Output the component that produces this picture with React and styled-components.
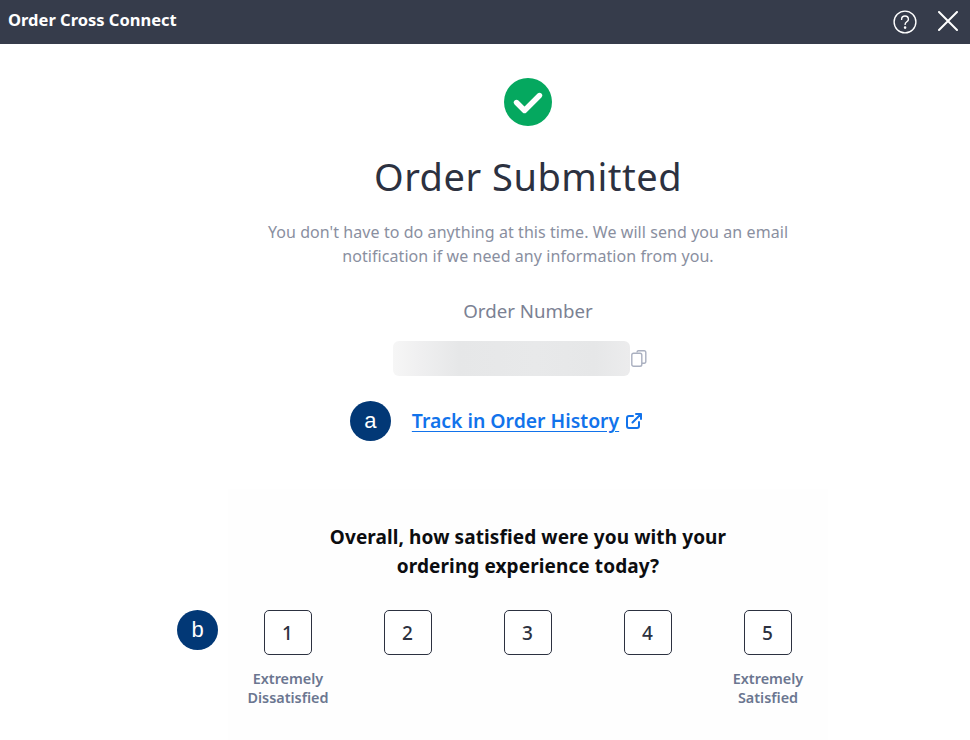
import React from 'react';
import styled, { createGlobalStyle } from 'styled-components';

const GlobalStyle = createGlobalStyle`
  html, body {
    margin: 0;
    padding: 0;
    background: #fff;
    font-family: 'Noto Sans', 'Open Sans', sans-serif;
  }
`;

const Page = styled.div`
  width: 970px;
  height: 740px;
  overflow: hidden;
  background: #fff;
`;

const TitleBar = styled.header`
  height: 44px;
  background: #363c4b;
  color: #fff;
  display: flex;
  align-items: center;
  justify-content: space-between;
  padding: 0 12px 0 8px;
`;

const TitleText = styled.h1`
  margin: 0 0 4px;
  font-size: 16.5px;
  line-height: 40px;
  height: 40px;
  font-weight: 700;
`;

const TitleActions = styled.div`
  display: flex;
  align-items: center;
  gap: 21px;
`;

const CloseGlyph = styled.svg`
  margin-bottom: 3px;
`;

const Body = styled.main`
  padding: 34px 0 0 86px;
  display: flex;
  flex-direction: column;
  align-items: center;
`;

const Heading = styled.h2`
  margin: 24px 0 0;
  font-size: 38px;
  line-height: 52px;
  font-weight: 400;
  letter-spacing: 0.52px;
  color: #2c3140;
`;

const Lead = styled.p`
  margin: 18px 0 0;
  width: 540px;
  text-align: center;
  font-size: 16px;
  line-height: 24px;
  letter-spacing: 0.07px;
  color: #8a8f9f;
`;

const OrderLabel = styled.div`
  margin-top: 30px;
  font-size: 18.7px;
  line-height: 26px;
  color: #7b8193;
`;

const OrderRow = styled.div`
  margin-top: 17px;
  width: 270px;
  height: 35px;
  display: flex;
  align-items: center;
  gap: 1px;
`;

const OrderMask = styled.div`
  width: 237px;
  height: 100%;
  border-radius: 6px;
  background: linear-gradient(90deg, #f6f6f6 0%, #f0f0f1 10%, #e6e7e8 28%, #e8e9ea 60%, #e6e7e8 85%, #ececed 100%);
`;

const LinkRow = styled.div`
  margin-top: 30px;
  margin-right: 2px;
  position: relative;
  display: flex;
  align-items: center;
  gap: 7px;
  color: #1273eb;
`;

const TrackLink = styled.a`
  font-size: 19.4px;
  line-height: 30px;
  font-weight: 600;
  color: #1273eb;
  text-decoration: underline;
  text-underline-offset: 3px;
`;

const Survey = styled.section`
  margin-top: 53px;
  width: 600px;
  height: 251px;
  background: #fefefe;
  padding-top: 34px;
  box-sizing: border-box;
  display: flex;
  flex-direction: column;
  align-items: center;
  position: relative;
`;

const Question = styled.h3`
  margin: 0;
  width: 440px;
  text-align: center;
  font-size: 19px;
  line-height: 29px;
  letter-spacing: 0.1px;
  font-weight: 700;
  color: #0c0d10;
`;

const Scale = styled.div`
  margin-top: 29px;
  display: grid;
  grid-template-columns: repeat(5, 120px);
`;

const ScaleItem = styled.div`
  display: flex;
  flex-direction: column;
  align-items: center;
`;

const ScaleButton = styled.button`
  width: 48px;
  height: 45px;
  padding: 0 1px 0 0;
  box-sizing: border-box;
  background: #fff;
  border: 1px solid #2c3140;
  border-radius: 5px;
  font-family: inherit;
  font-size: 19px;
  font-weight: 500;
  color: #2c3140;
`;

const ScaleCaption = styled.span`
  margin-top: 14px;
  text-align: center;
  font-size: 14.4px;
  line-height: 19px;
  font-weight: 600;
  color: #6b7690;
`;

const Marker = styled.span`
  position: absolute;
  left: ${({ $left }) => $left}px;
  top: ${({ $top }) => $top}px;
  width: 41px;
  height: 40px;
  border-radius: 50%;
  background: #023876;
  color: #fff;
  display: flex;
  align-items: center;
  justify-content: center;
  font-family: 'Liberation Sans', Arial, sans-serif;
  font-size: 22px;
  line-height: 1;
`;

const HelpIcon = () => (
  <svg width="24" height="24" viewBox="0 0 24 24" fill="none" stroke="#fff" strokeWidth="1.4" strokeLinecap="round">
    <circle cx="12" cy="12" r="10.9" />
    <path d="M8.6 9.4a3.4 3.4 0 0 1 6.8 0c0 2.2-3.3 2.6-3.3 5" />
    <circle cx="12.1" cy="17.6" r="0.6" fill="#fff" />
  </svg>
);

const CloseIcon = () => (
  <CloseGlyph width="20" height="20" viewBox="0 0 20 20" fill="none" stroke="#fff" strokeWidth="2" strokeLinecap="round">
    <path d="M1 1l18 18M19 1L1 19" />
  </CloseGlyph>
);

const SuccessIcon = () => (
  <svg width="48" height="48" viewBox="0 0 48 48">
    <circle cx="24" cy="24" r="24" fill="#05a85f" />
    <path d="M12.5 24.5l8 8 15-15" fill="none" stroke="#fff" strokeWidth="5.4" strokeLinecap="round" strokeLinejoin="round" />
  </svg>
);

const CopyIcon = () => (
  <svg width="16" height="17" viewBox="0 0 16 17" fill="none" stroke="#aab0c0" strokeWidth="1.4">
    <path d="M6 2.6V2.2A1.5 1.5 0 0 1 7.5.8h5.8a1.5 1.5 0 0 1 1.5 1.5v9.4a1.5 1.5 0 0 1-1.5 1.5H11" />
    <rect x="0.8" y="3.2" width="10" height="13" rx="1.8" />
  </svg>
);

const LinkOutIcon = () => (
  <svg width="16" height="16" viewBox="0 0 16 16" fill="none" stroke="currentColor" strokeWidth="2" strokeLinecap="round" strokeLinejoin="round">
    <path d="M7 3H3a2 2 0 0 0-2 2v8a2 2 0 0 0 2 2h8a2 2 0 0 0 2-2V9" />
    <path d="M6.5 9.5L15 1M10 1h5v5" />
  </svg>
);

const ratings = [
  { value: 1, caption: ['Extremely', 'Dissatisfied'] },
  { value: 2 },
  { value: 3 },
  { value: 4 },
  { value: 5, caption: ['Extremely', 'Satisfied'] },
];

export default function App() {
  return (
    <Page>
      <GlobalStyle />
      <TitleBar>
        <TitleText>Order Cross Connect</TitleText>
        <TitleActions>
          <HelpIcon />
          <CloseIcon />
        </TitleActions>
      </TitleBar>
      <Body>
        <SuccessIcon />
        <Heading>Order Submitted</Heading>
        <Lead>
          You don't have to do anything at this time. We will send you an email
          notification if we need any information from you.
        </Lead>
        <OrderLabel>Order Number</OrderLabel>
        <OrderRow>
          <OrderMask />
          <CopyIcon />
        </OrderRow>
        <LinkRow>
          <Marker $left={-62} $top={-5}>a</Marker>
          <TrackLink>Track in Order History</TrackLink>
          <LinkOutIcon />
        </LinkRow>
        <Survey>
          <Question>Overall, how satisfied were you with your ordering experience today?</Question>
          <Marker $left={-51} $top={121}>b</Marker>
          <Scale>
            {ratings.map((rating) => (
              <ScaleItem key={rating.value}>
                <ScaleButton>{rating.value}</ScaleButton>
                {rating.caption && (
                  <ScaleCaption>
                    {rating.caption[0]}
                    <br />
                    {rating.caption[1]}
                  </ScaleCaption>
                )}
              </ScaleItem>
            ))}
          </Scale>
        </Survey>
      </Body>
    </Page>
  );
}
